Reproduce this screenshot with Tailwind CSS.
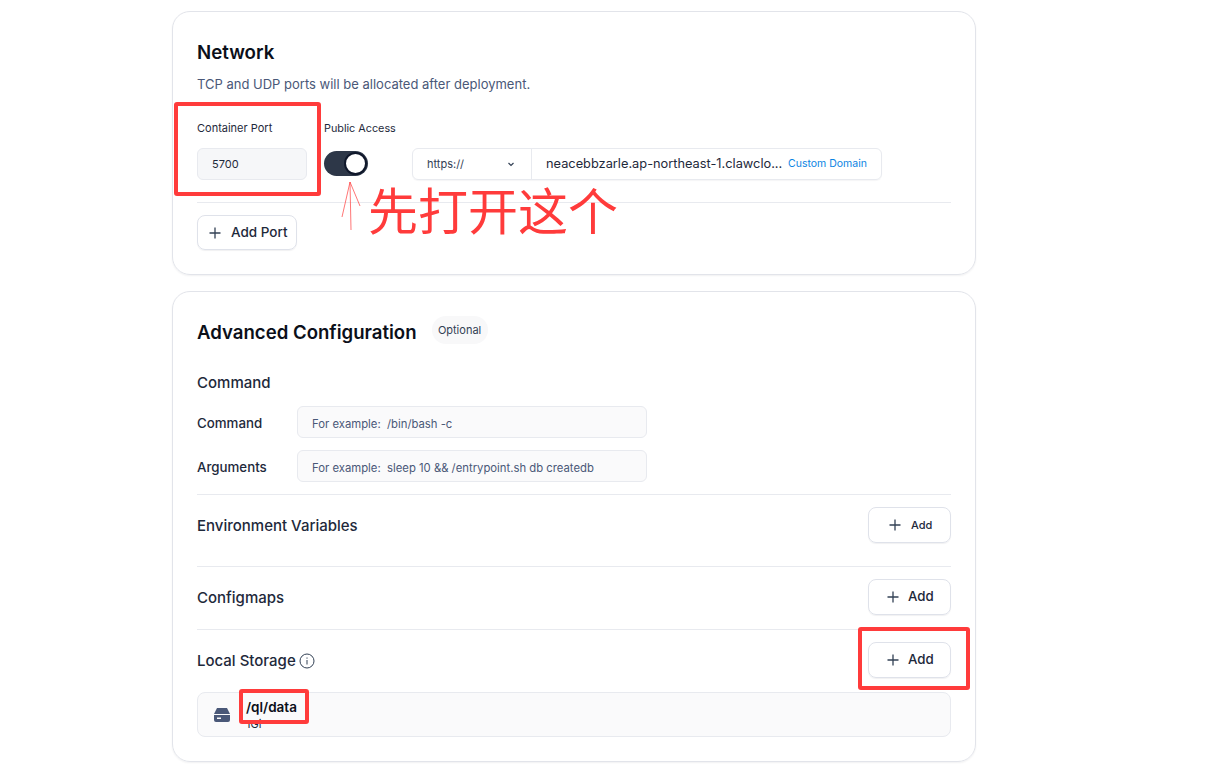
<!DOCTYPE html>
<html lang="en">
<head>
<meta charset="utf-8">
<title>Network settings</title>
<script src="https://cdn.jsdelivr.net/npm/@tailwindcss/browser@4"></script>
</head>
<body class="bg-white font-['Inter','Noto_Sans_CJK_SC',sans-serif] text-[#0f172a]">
<div class="relative h-[775px] w-[1206px] overflow-hidden">
  <main class="ml-[172px] flex w-[804px] flex-col gap-[16px] pt-[11px]">

    <!-- Network -->
    <section class="h-[264px] rounded-[18px] border border-[#e2e4ea] px-6 pt-7 shadow-[0_1px_2px_rgba(15,23,42,0.06)]">
      <h2 class="translate-y-px text-[18.7px] leading-6 font-semibold text-[#0b0f19]">Network</h2>
      <p class="mt-3 text-[13px] leading-4 text-[#4a5878]">TCP and UDP ports will be allocated after deployment.</p>
      <div class="mt-7 flex">
        <div class="w-[127px]">
          <div class="text-[11px] leading-4 text-[#1e293b]">Container Port</div>
          <div class="mt-3 flex h-8 w-[110px] items-center rounded-md border border-[#e8eaef] bg-[#f6f7f9] pt-px pl-[14px] text-[11px] text-[#1e293b]">5700</div>
        </div>
        <div class="w-[88px]">
          <div class="translate-y-px text-[10.8px] leading-4 text-[#1e293b]">Public Access</div>
          <div class="mt-[15px] flex h-[25px] w-11 items-center justify-end rounded-full bg-[#2d3748] pr-px">
            <span class="block h-[23px] w-[23px] rounded-full border-2 border-[#0f172a] bg-white"></span>
          </div>
        </div>
        <div class="mt-7 flex h-8 w-[470px] items-center rounded-md border border-[#e8eaef] shadow-[0_1px_1px_rgba(15,23,42,0.04)]">
          <div class="flex h-full w-[119px] items-center justify-between border-r border-[#e8eaef] pr-4 pl-[14px] text-[11px] text-[#334155]">
            <span>https://</span>
            <svg class="h-2 w-2" viewBox="0 0 8 8" fill="none" stroke="#334155" stroke-width="1.2"><path d="M1.5 3l2.5 2.5L6.500 3"/></svg>
          </div>
          <span class="ml-[14px] w-[242px] text-[12.8px] whitespace-nowrap text-[#1e293b]">neacebbzarle.ap-northeast-1.clawclo...</span>
          <span class="text-[10.5px] whitespace-nowrap text-[#0b84e3]">Custom Domain</span>
        </div>
      </div>
      <div class="mt-[22px] border-t border-[#e8eaef]"></div>
      <button class="mt-3 flex h-[35px] w-[100px] items-center gap-[10px] rounded-lg border border-[#dfe2ea] pl-[11px] text-[13.5px] font-medium text-[#1e293b] shadow-[0_1px_1px_rgba(15,23,42,0.06)]">
        <svg class="h-3 w-3" viewBox="0 0 12 12" stroke="#334155" stroke-width="1.3"><path d="M6 .5v11M.5 6h11"/></svg>
        Add Port
      </button>
    </section>

    <!-- Advanced Configuration -->
    <section class="h-[471px] rounded-[18px] border border-[#e2e4ea] px-6 pt-6 shadow-[0_1px_2px_rgba(15,23,42,0.06)]">
      <div class="flex h-7 items-center gap-[15px]">
        <h2 class="mt-1 text-[18.6px] leading-7 font-semibold text-[#0b0f19]">Advanced Configuration</h2>
        <span class="flex h-7 w-14 items-center justify-center rounded-full bg-[#f8f8f9] text-[11px] text-[#334155]">Optional</span>
      </div>

      <h3 class="mt-[30px] translate-y-px text-[15px] leading-4 font-medium text-[#1e293b]">Command</h3>
      <div class="mt-4 flex h-8 items-center">
        <label class="w-[100px] translate-y-[2px] text-[13.3px] font-medium text-[#1e293b]">Command</label>
        <div class="flex h-8 w-[350px] items-center rounded-md border border-[#e8eaef] bg-[#fafafb] pt-1 pl-[14px] text-[11.3px] text-[#4a5878]">For example:&nbsp; /bin/bash -c</div>
      </div>
      <div class="mt-3 flex h-8 items-center">
        <label class="w-[100px] translate-y-[2px] text-[13.3px] font-medium text-[#1e293b]">Arguments</label>
        <div class="flex h-8 w-[350px] items-center rounded-md border border-[#e8eaef] bg-[#fafafb] pt-1 pl-[14px] text-[11.3px] text-[#4a5878]">For example:&nbsp; sleep 10 &amp;&amp; /entrypoint.sh db createdb</div>
      </div>

      <div class="mt-3 flex h-[72px] items-start justify-between border-t border-[#e8eaef] pt-3">
        <h3 class="translate-y-px text-[15px] leading-9 font-medium text-[#1e293b]">Environment Variables</h3>
        <button class="flex h-9 w-[83px] items-center gap-[10px] rounded-lg border border-[#dfe2ea] pl-[20px] text-[11px] font-medium text-[#1e293b] shadow-[0_1px_1px_rgba(15,23,42,0.06)]">
          <svg class="h-3 w-3" viewBox="0 0 12 12" stroke="#334155" stroke-width="1.3"><path d="M6 .5v11M.5 6h11"/></svg>
          Add
        </button>
      </div>
      <div class="flex h-[63px] items-start justify-between border-t border-[#e8eaef] pt-3">
        <h3 class="translate-y-px text-[15px] leading-9 font-medium text-[#1e293b]">Configmaps</h3>
        <button class="flex h-9 w-[83px] items-center gap-[9px] rounded-lg border border-[#dfe2ea] pl-[18px] text-[13.3px] font-medium text-[#1e293b] shadow-[0_1px_1px_rgba(15,23,42,0.06)]">
          <svg class="h-3 w-3" viewBox="0 0 12 12" stroke="#334155" stroke-width="1.3"><path d="M6 .5v11M.5 6h11"/></svg>
          Add
        </button>
      </div>
      <div class="flex h-[63px] items-start justify-between border-t border-[#e8eaef] pt-3">
        <div class="flex h-9 translate-y-px items-center gap-[3px]">
          <h3 class="text-[15px] leading-9 font-medium text-[#1e293b]">Local Storage</h3>
          <svg class="h-4 w-4" viewBox="0 0 16 16" fill="none" stroke="#334155" stroke-width="1"><circle cx="8" cy="8" r="7"/><path d="M8 7v4.500M8 4.500v1.200"/></svg>
        </div>
        <button class="flex h-9 w-[83px] items-center gap-[9px] rounded-lg border border-[#dfe2ea] pl-[18px] text-[13.3px] font-medium text-[#1e293b] shadow-[0_1px_1px_rgba(15,23,42,0.06)]">
          <svg class="h-3 w-3" viewBox="0 0 12 12" stroke="#334155" stroke-width="1.3"><path d="M6 .5v11M.5 6h11"/></svg>
          Add
        </button>
      </div>
      <div class="flex h-[45px] items-center rounded-lg border border-[#e8eaef] bg-[#fafafb] pl-[15px]">
        <svg class="h-4 w-[18px]" viewBox="0 0 18 16" fill="#4a5878"><path d="M4 1h10l3 6H1z"/><path fill-rule="evenodd" d="M1 8h16v5a2 2 0 0 1-2 2H3a2 2 0 0 1-2-2zm3 2.500v1.500h4v-1.500z"/></svg>
        <div class="mb-[2px] ml-[15px] flex flex-col gap-[2px]">
          <span class="text-[13.5px] leading-[18px] font-semibold text-[#0b0f19]">/ql/data</span>
          <span class="text-[11px] leading-3 text-[#1e293b]">1Gi</span>
        </div>
      </div>
    </section>
  </main>

  <!-- screenshot annotations drawn over the page -->
  <div class="absolute top-[102px] left-[174px] h-[94px] w-[147px] rounded-[3px] border-[4px] border-[#ff3b3b]"></div>
  <div class="absolute top-[627px] left-[858px] h-[63px] w-[112px] rounded-[3px] border-[4px] border-[#ff3b3b]"></div>
  <div class="absolute top-[689px] left-[239px] h-[35px] w-[70px] rounded-[3px] border-[4px] border-[#ff3b3b]"></div>
  <svg class="absolute top-[180px] left-[340px] h-[54px] w-[22px]" viewBox="0 0 22 54" fill="none" stroke="#ff3b3b" stroke-width="0.7"><path d="M10 2l1 48M10 2L2 37M10 2l10 24"/></svg>
  <div class="absolute top-[177px] left-[368px] text-[50px] leading-[70px] text-[#ff3b3b]">先打开这个</div>
</div>
</body>
</html>
